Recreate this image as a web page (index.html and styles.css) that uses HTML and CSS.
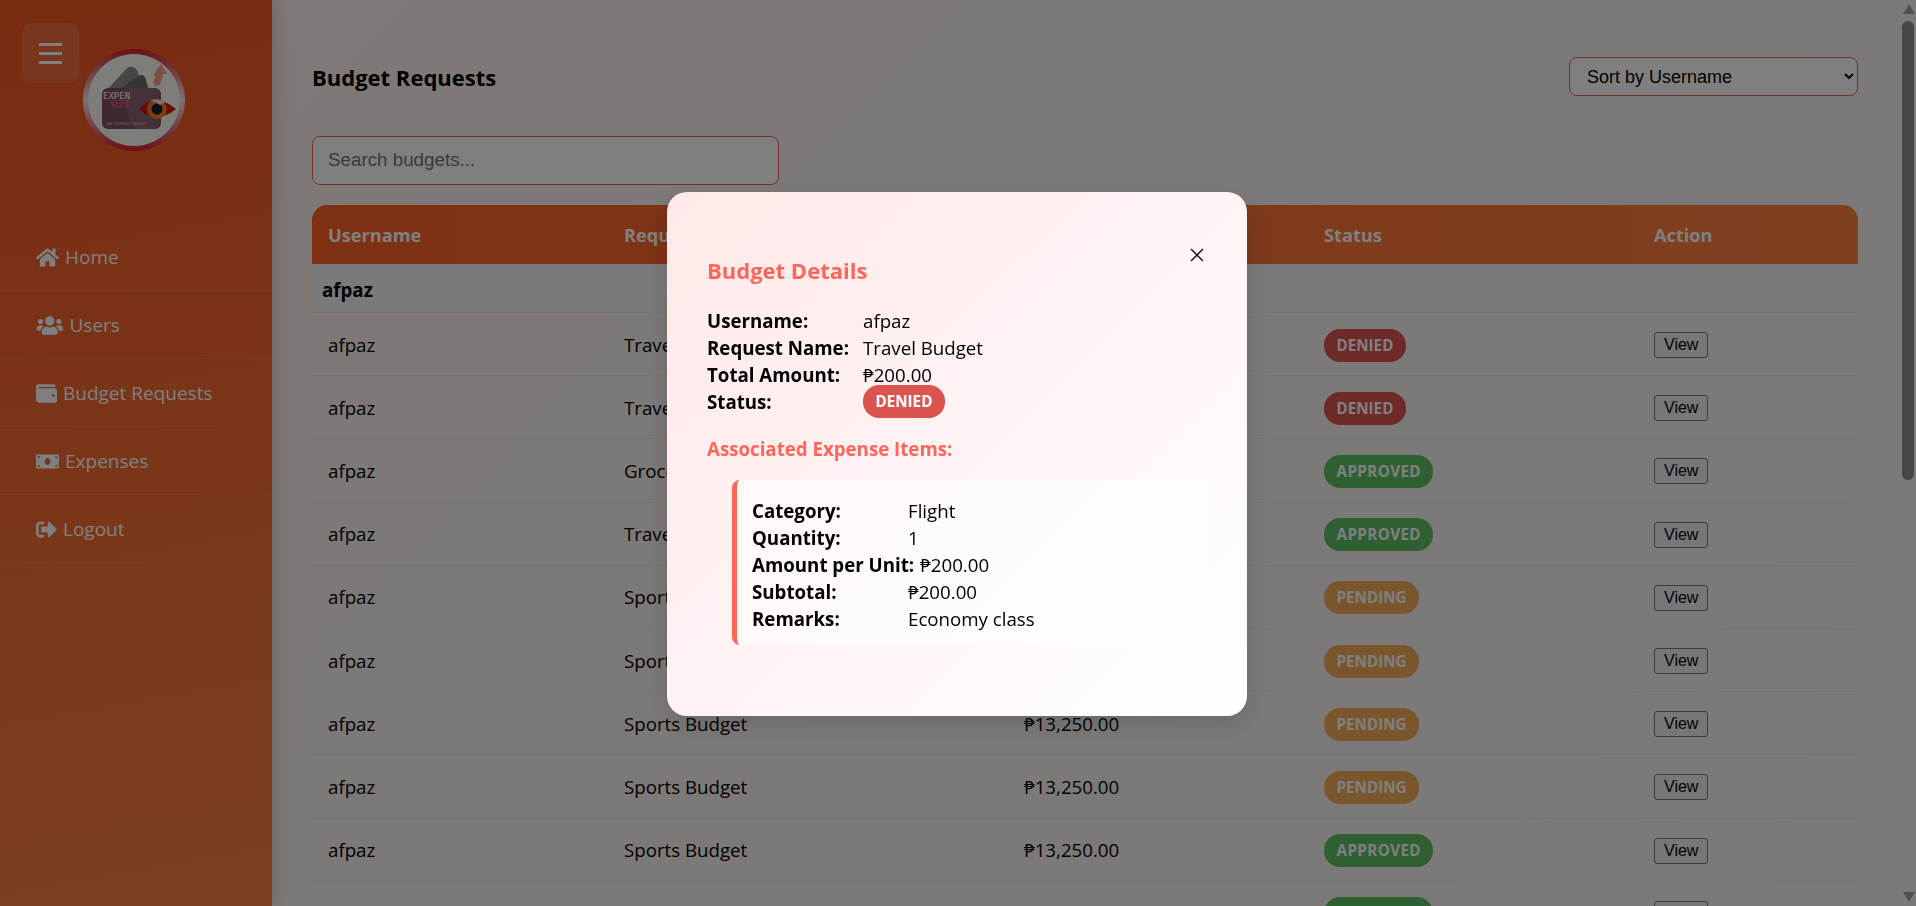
FILE: index.html
```html
<!DOCTYPE html>
<html lang="en">
<head>
    <meta charset="UTF-8">
    <meta name="viewport" content="width=device-width, initial-scale=1.0">
    <title>Budget Requests</title>
    <link rel="stylesheet" href="styles.css">
</head>
<body>
    <div class="layout">
        <aside class="sidebar">
            <button class="menu-toggle" aria-label="Menu"><span></span><span></span><span></span></button>
            <svg class="logo" viewBox="0 0 102 102" role="img" aria-label="ExpenSees">
                <defs>
                    <linearGradient id="ring" x1="0" y1="0" x2="0" y2="1">
                        <stop offset="0" stop-color="#d81c34"/>
                        <stop offset="0.5" stop-color="#f0e8e8"/>
                        <stop offset="1" stop-color="#d81c34"/>
                    </linearGradient>
                </defs>
                <circle cx="51" cy="51" r="51" fill="url(#ring)"/>
                <circle cx="51" cy="51" r="46" fill="#fbfbf2"/>
                <path d="M24 41 L43 20 Q49 15 54 21 L60 40 Z" fill="#8c8c8c"/>
                <path d="M36 41 L55 27 Q61 24 63 31 L66 41 Z" fill="#6a6a6a"/>
                <rect x="19" y="39" width="59" height="41" rx="6" fill="#7f5068"/>
                <path d="M76 41 L76 76 Q75 80 70 80 L52 80 Q40 62 42 39 L72 39 Z" fill="#8c6075"/>
                <text class="logo-text" x="20" y="50">EXPEN</text>
                <text class="logo-text logo-sees" x="27" y="58">$EE$</text>
                <text class="logo-small" x="23" y="76">DAILY EXPENSE TRACKER</text>
                <path d="M56 60 Q73 43 93 60 Q73 76 56 60 Z" fill="#d81010"/>
                <circle cx="74" cy="60" r="10" fill="#ff7a22"/>
                <circle cx="74" cy="60" r="5.5" fill="#06262e"/>
                <path d="M67 52 Q74 48 82 53 L77 56 Q72 52 67 52 Z" fill="#f4e8e8"/>
                <path d="M70 33 L73 27 L70 26 L78 15 L84 25 L80 25 L77 36 L72 37 Z" fill="#ff9a8c"/>
            </svg>
            <nav class="nav">
                <a class="nav-item" href="#">
                    <svg class="nav-icon icon-home" viewBox="0 0 576 512"><path d="M280.37 148.26L96 300.11V464a16 16 0 0 0 16 16l112.06-.29a16 16 0 0 0 15.92-16V368a16 16 0 0 1 16-16h64a16 16 0 0 1 16 16v95.64a16 16 0 0 0 16 16.05L464 480a16 16 0 0 0 16-16V300L295.67 148.26a12.19 12.19 0 0 0-15.3 0zM571.6 251.47L488 182.56V44.05a12 12 0 0 0-12-12h-56a12 12 0 0 0-12 12v72.61L318.47 43a48 48 0 0 0-61 0L4.34 251.47a12 12 0 0 0-1.6 16.9l25.5 31A12 12 0 0 0 45.15 301l235.22-193.74a12.19 12.19 0 0 1 15.3 0L530.9 301a12 12 0 0 0 16.9-1.6l25.5-31a12 12 0 0 0-1.7-16.93z"/></svg>
                    Home
                </a>
                <a class="nav-item" href="#">
                    <svg class="nav-icon icon-users" viewBox="0 0 640 512"><path d="M96 224c35.3 0 64-28.7 64-64s-28.7-64-64-64-64 28.7-64 64 28.7 64 64 64zm448 0c35.3 0 64-28.7 64-64s-28.7-64-64-64-64 28.7-64 64 28.7 64 64 64zm32 32h-64c-17.6 0-33.5 7.1-45.1 18.6 40.3 22.1 68.9 62 75.1 109.4h66c17.7 0 32-14.3 32-32v-32c0-35.3-28.7-64-64-64zm-256 0c61.9 0 112-50.1 112-112S381.9 32 320 32 208 82.1 208 144s50.1 112 112 112zm76.8 32h-8.3c-20.8 10-43.9 16-68.5 16s-47.6-6-68.5-16h-8.3C179.6 288 128 339.6 128 403.2V432c0 26.5 21.5 48 48 48h288c26.5 0 48-21.5 48-48v-28.8c0-63.6-51.6-115.2-115.2-115.2zm-223.7-13.4C161.5 263.1 145.6 256 128 256H64c-35.3 0-64 28.7-64 64v32c0 17.7 14.3 32 32 32h65.9c6.3-47.4 34.9-87.3 75.2-109.4z"/></svg>
                    Users
                </a>
                <a class="nav-item" href="#">
                    <svg class="nav-icon icon-wallet" viewBox="0 0 512 512"><path d="M461.2 128H80c-8.84 0-16-7.16-16-16s7.16-16 16-16h384c8.84 0 16-7.16 16-16 0-26.51-21.49-48-48-48H64C28.65 32 0 60.65 0 96v320c0 35.35 28.65 64 64 64h397.2c28.02 0 50.8-21.53 50.8-48V176c0-26.47-22.78-48-50.8-48zM416 336c-17.67 0-32-14.33-32-32s14.33-32 32-32 32 14.33 32 32-14.33 32-32 32z"/></svg>
                    Budget Requests
                </a>
                <a class="nav-item" href="#">
                    <svg class="nav-icon icon-bill" viewBox="0 0 640 512"><path d="M608 64H32C14.33 64 0 78.33 0 96v320c0 17.67 14.33 32 32 32h576c17.67 0 32-14.33 32-32V96c0-17.67-14.33-32-32-32zM48 400v-64c35.35 0 64 28.65 64 64H48zm0-224v-64h64c0 35.35-28.65 64-64 64zm272 176c-44.19 0-80-42.99-80-96 0-53.02 35.82-96 80-96s80 42.98 80 96c0 53.03-35.83 96-80 96zm272 48h-64c0-35.35 28.65-64 64-64v64zm0-224c-35.35 0-64-28.65-64-64h64v64z"/></svg>
                    Expenses
                </a>
                <a class="nav-item" href="#">
                    <svg class="nav-icon icon-wallet" viewBox="0 0 512 512"><path d="M497 273L329 441c-15 15-41 4.5-41-17v-96H152c-13.3 0-24-10.7-24-24v-96c0-13.3 10.7-24 24-24h136V88c0-21.4 25.9-32 41-17l168 168c9.3 9.4 9.3 24.6 0 34zM192 436v-40c0-6.6-5.4-12-12-12H96c-17.7 0-32-14.3-32-32V160c0-17.7 14.3-32 32-32h84c6.6 0 12-5.4 12-12V76c0-6.6-5.4-12-12-12H96c-53 0-96 43-96 96v192c0 53 43 96 96 96h84c6.6 0 12-5.4 12-12z"/></svg>
                    Logout
                </a>
            </nav>
        </aside>

        <main class="main">
            <div class="page-head">
                <h1 class="page-title">Budget Requests</h1>
                <select class="sort-select">
                    <option>Sort by Username</option>
                </select>
            </div>
            <input class="search-input" type="text" placeholder="Search budgets...">

            <table class="budget-table">
                <colgroup>
                    <col class="col-user"><col class="col-name"><col class="col-amount"><col class="col-status"><col class="col-action">
                </colgroup>
                <thead>
                    <tr><th>Username</th><th>Request Name</th><th>Total Amount</th><th>Status</th><th>Action</th></tr>
                </thead>
                <tbody>
                    <tr class="group-row"><td colspan="5">afpaz</td></tr>
                    <tr><td>afpaz</td><td>Travel Budget</td><td>₱200.00</td><td><span class="badge denied">DENIED</span></td><td><button class="view-btn">View</button></td></tr>
                    <tr><td>afpaz</td><td>Travel Budget</td><td>₱200.00</td><td><span class="badge denied">DENIED</span></td><td><button class="view-btn">View</button></td></tr>
                    <tr><td>afpaz</td><td>Grocery Budget</td><td>₱200.00</td><td><span class="badge approved">APPROVED</span></td><td><button class="view-btn">View</button></td></tr>
                    <tr><td>afpaz</td><td>Travel Budget</td><td>₱200.00</td><td><span class="badge approved">APPROVED</span></td><td><button class="view-btn">View</button></td></tr>
                    <tr><td>afpaz</td><td>Sports Budget</td><td>₱13,250.00</td><td><span class="badge pending">PENDING</span></td><td><button class="view-btn">View</button></td></tr>
                    <tr><td>afpaz</td><td>Sports Budget</td><td>₱13,250.00</td><td><span class="badge pending">PENDING</span></td><td><button class="view-btn">View</button></td></tr>
                    <tr><td>afpaz</td><td>Sports Budget</td><td>₱13,250.00</td><td><span class="badge pending">PENDING</span></td><td><button class="view-btn">View</button></td></tr>
                    <tr><td>afpaz</td><td>Sports Budget</td><td>₱13,250.00</td><td><span class="badge pending">PENDING</span></td><td><button class="view-btn">View</button></td></tr>
                    <tr><td>afpaz</td><td>Sports Budget</td><td>₱13,250.00</td><td><span class="badge approved">APPROVED</span></td><td><button class="view-btn">View</button></td></tr>
                    <tr><td>afpaz</td><td>Sports Budget</td><td>₱13,250.00</td><td><span class="badge approved">APPROVED</span></td><td><button class="view-btn">View</button></td></tr>
                </tbody>
            </table>
        </main>
    </div>

    <div class="scrollbar">
        <span class="scroll-up"></span>
        <span class="scroll-thumb"></span>
        <span class="scroll-down"></span>
    </div>

    <div class="modal-overlay">
        <div class="modal">
            <button class="modal-close" aria-label="Close">
                <svg viewBox="0 0 14 14"><path d="M1 1 L13 13 M13 1 L1 13"/></svg>
            </button>
            <h2 class="modal-title">Budget Details</h2>
            <div class="detail-row"><span class="detail-label">Username:</span><span>afpaz</span></div>
            <div class="detail-row"><span class="detail-label">Request Name:</span><span>Travel Budget</span></div>
            <div class="detail-row"><span class="detail-label">Total Amount:</span><span>₱200.00</span></div>
            <div class="detail-row"><span class="detail-label">Status:</span><span class="badge denied">DENIED</span></div>
            <h3 class="modal-subtitle">Associated Expense Items:</h3>
            <div class="expense-item">
                <div class="detail-row"><span class="detail-label">Category:</span><span>Flight</span></div>
                <div class="detail-row"><span class="detail-label">Quantity:</span><span>1</span></div>
                <div class="detail-row"><span class="detail-label">Amount per Unit:</span><span>₱200.00</span></div>
                <div class="detail-row"><span class="detail-label">Subtotal:</span><span>₱200.00</span></div>
                <div class="detail-row"><span class="detail-label">Remarks:</span><span>Economy class</span></div>
            </div>
        </div>
    </div>
</body>
</html>
```

FILE: styles.css
```css
* {
    box-sizing: border-box;
}

html, body {
    height: 100%;
    margin: 0;
    overflow: hidden;
}

body {
    font-family: "Open Sans", "Noto Sans", sans-serif;
    font-size: 18.7px;
    color: #000;
    background: linear-gradient(135deg, #fff2ee, #f4f4f4);
}

.layout {
    display: flex;
    height: 100%;
}

/* Sidebar */
.sidebar {
    position: relative;
    flex: 0 0 272px;
    padding-top: 49px;
    background: linear-gradient(170deg, #f25620, #f98045);
    box-shadow: 4px 0 15px rgba(0, 0, 0, 0.15);
}

.menu-toggle {
    position: absolute;
    top: 23px;
    left: 22px;
    display: flex;
    flex-direction: column;
    align-items: center;
    justify-content: center;
    gap: 6px;
    width: 57px;
    height: 60px;
    padding: 0;
    border: none;
    border-radius: 10px;
    background: rgba(255, 255, 255, 0.12);
}

.menu-toggle span {
    width: 23px;
    height: 3px;
    background: #fff;
}

.logo {
    display: block;
    width: 102px;
    height: 102px;
    margin-left: 83px;
}

.logo-text {
    font-family: "DejaVu Sans Mono", monospace;
    font-size: 9px;
    fill: #fff;
}

.logo-sees {
    fill: #ff5a70;
    font-size: 8px;
}

.logo-small {
    font-family: "Liberation Sans", sans-serif;
    font-size: 3.1px;
    fill: #d8c0cc;
}

.nav {
    margin-top: 72px;
}

.nav-item {
    display: flex;
    align-items: center;
    gap: 6px;
    height: 68px;
    padding: 1px 0 0 36px;
    border-bottom: 1px solid rgba(255, 255, 255, 0.1);
    color: #fff;
    font-size: 19px;
    text-decoration: none;
}

.nav-icon {
    height: 21px;
    fill: #fff;
}

.icon-home { width: 23px; }
.icon-users { width: 27.5px; }
.icon-wallet { width: 21px; }
.icon-bill { width: 23px; }

/* Main content */
.main {
    flex: 1;
    min-width: 0;
    padding: 57px 58px 0 40px;
}

.page-head {
    display: flex;
    align-items: center;
    justify-content: space-between;
    height: 39px;
}

.page-title {
    margin: 0;
    font-size: 22px;
    font-weight: 700;
}

.sort-select {
    width: 289px;
    height: 39px;
    padding-left: 13px;
    border: 1px solid #f0605a;
    border-radius: 8px;
    background: rgba(255, 255, 255, 0.9);
    font-family: "Liberation Sans", sans-serif;
    font-size: 18px;
    color: #000;
}

.search-input {
    display: block;
    width: 467px;
    height: 49px;
    margin-top: 40px;
    padding: 0 15px 2px;
    border: 1px solid #f0605a;
    border-radius: 8px;
    background: rgba(255, 255, 255, 0.9);
    font-family: "Liberation Sans", sans-serif;
    font-size: 18.8px;
}

.budget-table {
    width: 1546px;
    margin-top: 20px;
    border-collapse: separate;
    border-spacing: 0;
    table-layout: fixed;
}

.col-user { width: 296px; }
.col-name { width: 400px; }
.col-amount { width: 300px; }
.col-status { width: 330px; }
.col-action { width: 220px; }

.budget-table thead tr {
    background: linear-gradient(90deg, #ff6126, #ff8040);
}

.budget-table th {
    height: 59px;
    padding: 1px 16px 0;
    color: #fff;
    font-size: 18.2px;
    font-weight: 700;
    text-align: left;
}

.budget-table th:first-child {
    border-top-left-radius: 15px;
}

.budget-table th:last-child {
    border-top-right-radius: 15px;
}

.budget-table td {
    height: 63.2px;
    padding: 0 16px;
    border-bottom: 1px solid #e8e8e8;
}

.budget-table .group-row td {
    height: 49px;
    padding: 2px 10px 0;
    background: #f5f5f5;
    font-size: 18.7px;
    font-weight: 700;
}

.badge {
    display: inline-block;
    position: relative;
    top: 1px;
    height: 33px;
    padding: 0 12.5px;
    border-radius: 16px;
    color: #fff;
    font-size: 15.2px;
    font-weight: 700;
    line-height: 33px;
}

.denied { background: #dc5450; }
.pending { background: #f5ad58; }
.approved {
    background: #60c064;
    letter-spacing: 0.4px;
}

.view-btn {
    display: block;
    position: relative;
    top: 1px;
    padding: 3px 9px;
    border: 1px solid #767676;
    border-radius: 3px;
    background: #efefef;
    font-family: "Liberation Sans", sans-serif;
    font-size: 16px;
    color: #000;
}

/* Window scrollbar */
.scrollbar {
    position: fixed;
    top: 0;
    right: 0;
    bottom: 0;
    width: 16px;
}

.scroll-up,
.scroll-down {
    position: absolute;
    left: 3px;
    width: 0;
    height: 0;
    border-left: 6px solid transparent;
    border-right: 6px solid transparent;
}

.scroll-up {
    top: 4px;
    border-bottom: 10px solid #a0a0a0;
}

.scroll-down {
    bottom: 4px;
    border-top: 10px solid #a0a0a0;
}

.scroll-thumb {
    position: absolute;
    top: 21px;
    left: 2px;
    width: 12px;
    height: 459px;
    border-radius: 6px;
    background: #8c8c8c;
}

/* Modal */
.modal-overlay {
    position: fixed;
    inset: 0;
    display: flex;
    align-items: center;
    justify-content: center;
    padding: 2px 2px 0 0;
    background: rgba(0, 0, 0, 0.5);
}

.modal {
    position: relative;
    width: 580px;
    height: 524px;
    padding: 40px;
    border-radius: 20px;
    background: linear-gradient(135deg, #ffe8e8, #fff);
    box-shadow: 0 8px 24px rgba(0, 0, 0, 0.15);
}

.modal-close {
    position: absolute;
    top: 56px;
    right: 43px;
    width: 14px;
    height: 14px;
    padding: 0;
    border: none;
    background: none;
}

.modal-close svg {
    display: block;
    stroke: #222;
    stroke-width: 1.6;
    fill: none;
}

.modal-title {
    margin: 23px 0 22px;
    color: #ff6659;
    font-size: 22px;
    font-weight: 700;
    line-height: 30px;
}

.modal-subtitle {
    margin: 21px 0 18px;
    color: #ff6659;
    font-size: 18.7px;
    font-weight: 700;
    line-height: 26px;
}

.detail-row {
    display: flex;
    align-items: center;
    line-height: 27px;
    height: 27px;
}

.detail-label {
    min-width: 150px;
    margin-right: 6px;
    font-weight: 700;
}

.detail-row .badge {
    top: 0;
}

.expense-item {
    margin-left: 25px;
    width: 476px;
    padding: 17px 15px 13px;
    border-left: 5px solid #ff6659;
    border-radius: 8px;
    background: rgba(255, 255, 255, 0.5);
}
```
